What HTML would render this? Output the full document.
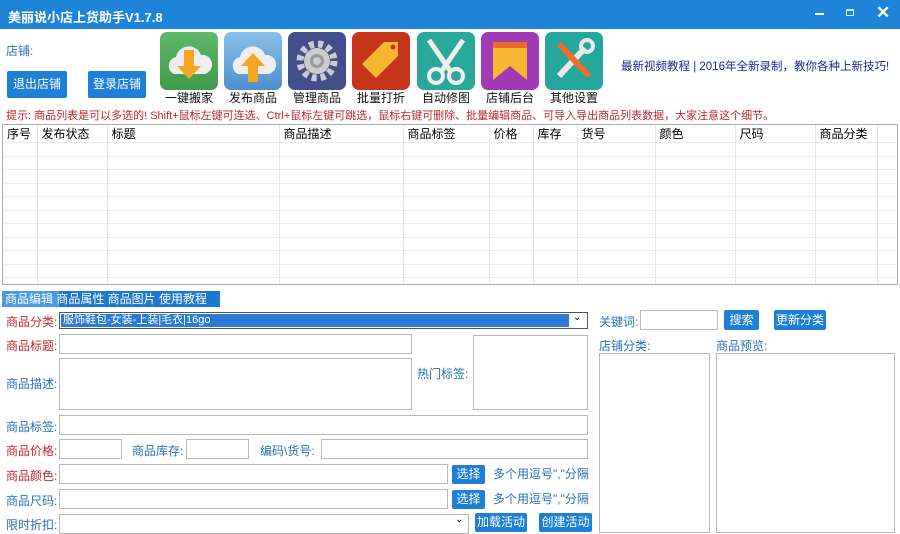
<!DOCTYPE html>
<html><head><meta charset="utf-8"><style>
*{margin:0;padding:0;box-sizing:border-box}
body{width:900px;height:529px;overflow:hidden;background:#fff;font-family:"Liberation Sans","Noto Sans CJK SC",sans-serif;font-size:12px;position:relative}
.a{position:absolute;white-space:nowrap}
.bar{left:0;top:0;width:900px;height:29px;background:#1d84d8;color:#fff}
.btn{background:#1e7fd6;color:#fff;text-align:center;border-radius:2px}
.ic{width:58px;height:58px;border-radius:7px;top:32px}
.lab{top:89px;font-size:12px;color:#111;width:70px;text-align:center}
.in{border:1px solid #b8b8b8;background:#fff}
.bl{color:#2a6fb8}
.rd{color:#c0282e}
table{border-collapse:collapse}
td{border-right:1px solid #e6e6e6;border-bottom:1px solid #ededed;height:13.5px}
</style></head><body>
<div class="a bar">
 <div class="a" style="left:8px;top:7px;font-size:13px;font-weight:bold">美丽说小店上货助手V1.7.8</div>
 <div class="a" style="left:815px;top:13px;width:9px;height:2px;background:#fff"></div>
 <div class="a" style="left:846px;top:9px;width:8px;height:7px;border:1px solid #cfe4f7;border-top-width:2px"></div>
 <div class="a" style="left:876px;top:3px;font-size:17px;font-weight:bold">✕</div>
</div>
<div class="a bl" style="left:6px;top:42px">店铺:</div>
<div class="a btn" style="left:7px;top:71px;width:60px;height:27px;line-height:27px">退出店铺</div>
<div class="a btn" style="left:88px;top:71px;width:58px;height:27px;line-height:27px">登录店铺</div>

<div class="a ic" style="left:160px;background:linear-gradient(#5fb86a,#3f9a4a)"><svg width="58" height="58"><path d="M14 42a9 9 0 0 1 2-17 13 13 0 0 1 25-2 9 9 0 0 1 3 19z" fill="#eee"/><path d="M24 18h10v16h7l-12 13-12-13h7z" fill="#f6a623"/></svg></div>
<div class="a ic" style="left:224px;background:linear-gradient(#8ac0ea,#4e8fce)"><svg width="58" height="58"><path d="M14 42a9 9 0 0 1 2-17 13 13 0 0 1 25-2 9 9 0 0 1 3 19z" fill="#eee"/><path d="M24 50h10V34h7L29 21 17 34h7z" fill="#f6a623"/></svg></div>
<div class="a ic" style="left:288px;background:#434f8a"><svg width="58" height="58"><circle cx="29" cy="29" r="17" fill="none" stroke="#ccc" stroke-width="7" stroke-dasharray="5 4"/><circle cx="29" cy="29" r="13" fill="#ccc"/><circle cx="29" cy="29" r="7" fill="#999"/><circle cx="29" cy="29" r="4" fill="#ccc"/></svg></div>
<div class="a ic" style="left:352px;background:#c4351c"><svg width="58" height="58"><path d="M10 32L32 10h14v14L24 46z" fill="#f7b731"/><circle cx="41" cy="15" r="2.5" fill="#c4351c"/></svg></div>
<div class="a ic" style="left:417px;background:#2aa89a"><svg width="58" height="58"><path d="M12 8l22 32M46 8L24 40" stroke="#eee" stroke-width="5"/><circle cx="19" cy="44" r="7" fill="none" stroke="#eee" stroke-width="4"/><circle cx="39" cy="44" r="7" fill="none" stroke="#eee" stroke-width="4"/></svg></div>
<div class="a ic" style="left:481px;background:#a03ab6"><svg width="58" height="58"><path d="M12 10h34v38L29 34 12 48z" fill="#f7b731"/><rect x="12" y="10" width="34" height="6" fill="#e86b2a"/></svg></div>
<div class="a ic" style="left:545px;background:#25a79e"><svg width="58" height="58"><path d="M14 44L40 16" stroke="#e8e8e8" stroke-width="6"/><path d="M14 12l30 32" stroke="#ef6c2c" stroke-width="6"/><circle cx="42" cy="14" r="6" fill="none" stroke="#e8e8e8" stroke-width="4"/></svg></div>
<div class="a lab" style="left:154px">一键搬家</div>
<div class="a lab" style="left:218px">发布商品</div>
<div class="a lab" style="left:282px">管理商品</div>
<div class="a lab" style="left:346px">批量打折</div>
<div class="a lab" style="left:411px">自动修图</div>
<div class="a lab" style="left:475px">店铺后台</div>
<div class="a lab" style="left:539px">其他设置</div>
<div class="a" style="left:621px;top:58px;color:#1a2a9a;font-size:11.5px">最新视频教程 | 2016年全新录制，教你各种上新技巧!</div>
<div class="a rd" style="left:6px;top:107px;font-size:11px">提示: 商品列表是可以多选的! Shift+鼠标左键可连选、Ctrl+鼠标左键可跳选，鼠标右键可删除、批量编辑商品、可导入导出商品列表数据，大家注意这个细节。</div>

<div class="a" style="left:2px;top:124px;width:896px;height:161px;border:1px solid #aaa;overflow:hidden">
<table style="width:896px">
<tr style="height:17px"><td style="width:34px;padding-left:4px">序号</td><td style="width:70px;padding-left:4px">发布状态</td><td style="width:172px;padding-left:4px">标题</td><td style="width:124px;padding-left:4px">商品描述</td><td style="width:86px;padding-left:4px">商品标签</td><td style="width:44px;padding-left:4px">价格</td><td style="width:44px;padding-left:4px">库存</td><td style="width:78px;padding-left:4px">货号</td><td style="width:80px;padding-left:4px">颜色</td><td style="width:80px;padding-left:4px">尺码</td><td style="width:62px;padding-left:4px">商品分类</td><td></td></tr>
<tr><td></td><td></td><td></td><td></td><td></td><td></td><td></td><td></td><td></td><td></td><td></td><td></td></tr>
<tr><td></td><td></td><td></td><td></td><td></td><td></td><td></td><td></td><td></td><td></td><td></td><td></td></tr>
<tr><td></td><td></td><td></td><td></td><td></td><td></td><td></td><td></td><td></td><td></td><td></td><td></td></tr>
<tr><td></td><td></td><td></td><td></td><td></td><td></td><td></td><td></td><td></td><td></td><td></td><td></td></tr>
<tr><td></td><td></td><td></td><td></td><td></td><td></td><td></td><td></td><td></td><td></td><td></td><td></td></tr>
<tr><td></td><td></td><td></td><td></td><td></td><td></td><td></td><td></td><td></td><td></td><td></td><td></td></tr>
<tr><td></td><td></td><td></td><td></td><td></td><td></td><td></td><td></td><td></td><td></td><td></td><td></td></tr>
<tr><td></td><td></td><td></td><td></td><td></td><td></td><td></td><td></td><td></td><td></td><td></td><td></td></tr>
<tr><td></td><td></td><td></td><td></td><td></td><td></td><td></td><td></td><td></td><td></td><td></td><td></td></tr>
<tr><td></td><td></td><td></td><td></td><td></td><td></td><td></td><td></td><td></td><td></td><td></td><td></td></tr>
<tr><td></td><td></td><td></td><td></td><td></td><td></td><td></td><td></td><td></td><td></td><td></td><td></td></tr>
</table></div>

<div class="a" style="left:2px;top:291px;width:218px;height:16px;background:#1e78d0"></div>
<div class="a" style="left:2px;top:291px;width:57px;height:16px;background:#4a9be2"></div>
<div class="a" style="left:5px;top:291px;color:#fff;font-size:12px;line-height:16px">商品编辑 商品属性 商品图片 使用教程</div>

<div class="a rd" style="left:6px;top:313px">商品分类:</div>
<div class="a in" style="left:59px;top:312px;width:529px;height:17px;border-color:#555"></div>
<div class="a" style="left:61px;top:314px;width:508px;height:13px;background:#2a7ad6;color:#fff;font-size:11px;line-height:13px;padding-left:2px">服饰鞋包-女装-上装|毛衣|16go</div>
<div class="a" style="left:573px;top:312px;font-size:10px">⌄</div>
<div class="a rd" style="left:6px;top:337px">商品标题:</div>
<div class="a in" style="left:59px;top:334px;width:353px;height:20px"></div>
<div class="a bl" style="left:6px;top:375px">商品描述:</div>
<div class="a in" style="left:59px;top:358px;width:353px;height:52px"></div>
<div class="a bl" style="left:417px;top:365px">热门标签:</div>
<div class="a in" style="left:473px;top:335px;width:115px;height:75px"></div>
<div class="a bl" style="left:6px;top:418px">商品标签:</div>
<div class="a in" style="left:59px;top:415px;width:529px;height:20px"></div>
<div class="a rd" style="left:6px;top:442px">商品价格:</div>
<div class="a in" style="left:59px;top:439px;width:63px;height:20px"></div>
<div class="a bl" style="left:132px;top:442px">商品库存:</div>
<div class="a in" style="left:186px;top:439px;width:63px;height:20px"></div>
<div class="a bl" style="left:260px;top:442px">编码\货号:</div>
<div class="a in" style="left:321px;top:439px;width:267px;height:20px"></div>
<div class="a rd" style="left:6px;top:467px">商品颜色:</div>
<div class="a in" style="left:59px;top:464px;width:389px;height:20px"></div>
<div class="a btn" style="left:452px;top:465px;width:33px;height:19px;line-height:19px">选择</div>
<div class="a bl" style="left:493px;top:465px">多个用逗号","分隔</div>
<div class="a bl" style="left:6px;top:492px">商品尺码:</div>
<div class="a in" style="left:59px;top:489px;width:389px;height:20px"></div>
<div class="a btn" style="left:452px;top:490px;width:33px;height:19px;line-height:19px">选择</div>
<div class="a bl" style="left:493px;top:490px">多个用逗号","分隔</div>
<div class="a bl" style="left:6px;top:516px">限时折扣:</div>
<div class="a in" style="left:59px;top:514px;width:410px;height:20px"></div>
<div class="a" style="left:455px;top:514px;font-size:10px">⌄</div>
<div class="a btn" style="left:475px;top:513px;width:52px;height:19px;line-height:19px">加载活动</div>
<div class="a btn" style="left:539px;top:513px;width:53px;height:19px;line-height:19px">创建活动</div>

<div class="a bl" style="left:599px;top:313px">关键词:</div>
<div class="a in" style="left:640px;top:310px;width:78px;height:20px"></div>
<div class="a btn" style="left:724px;top:310px;width:35px;height:20px;line-height:20px">搜索</div>
<div class="a btn" style="left:774px;top:310px;width:52px;height:20px;line-height:20px">更新分类</div>
<div class="a bl" style="left:599px;top:337px">店铺分类:</div>
<div class="a bl" style="left:716px;top:337px">商品预览:</div>
<div class="a in" style="left:599px;top:353px;width:111px;height:180px"></div>
<div class="a in" style="left:716px;top:353px;width:179px;height:180px"></div>
</body></html>
